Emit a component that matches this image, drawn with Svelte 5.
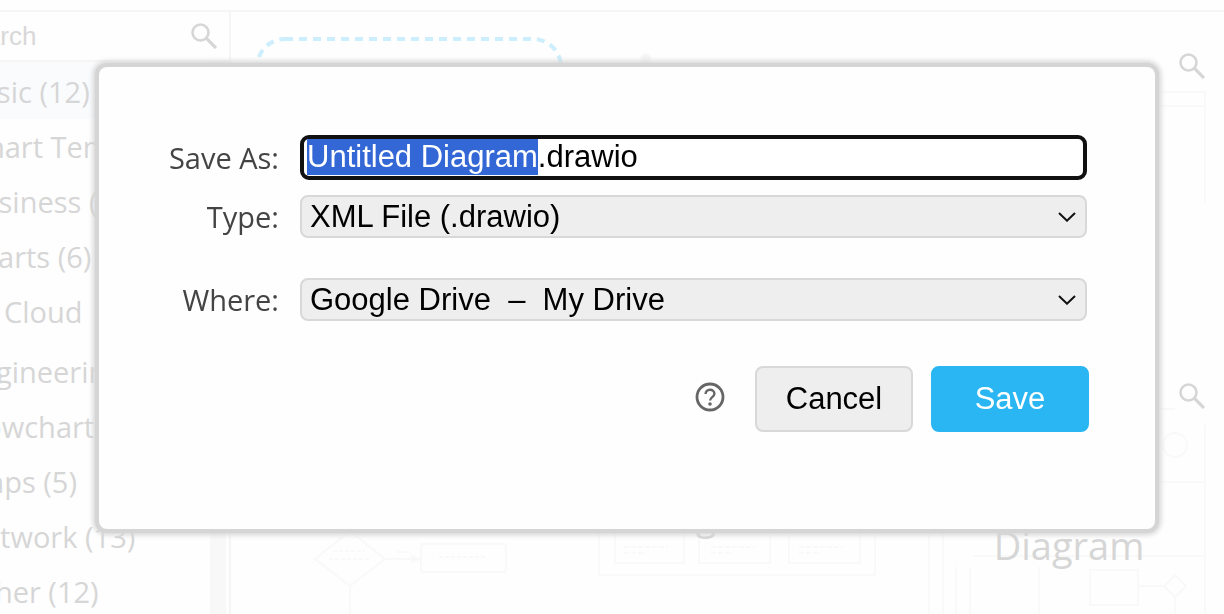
<script>
  import { onMount } from 'svelte';

  const categories = ['Basic (12)', 'Smart Tem', 'Business (', 'Charts (6)', 'Cloud', 'Engineerin', 'Flowchart', 'Maps (5)', 'Network (13)', 'Other (12)'];

  let filename = $state('Untitled Diagram.drawio');
  let nameInput;

  onMount(() => {
    nameInput.focus();
    nameInput.setSelectionRange(0, filename.lastIndexOf('.'));
  });
</script>

{#snippet magnifier()}
  <svg class="magnifier" viewBox="0 0 26 26" aria-hidden="true">
    <circle cx="9.5" cy="9.5" r="8" fill="none" stroke="currentColor" stroke-width="2.6" />
    <path d="M15.2 15.2 25 25" stroke="currentColor" stroke-width="3.2" />
  </svg>
{/snippet}

{#snippet chevron()}
  <svg class="chevron" viewBox="0 0 18 10" aria-hidden="true">
    <path d="M1 1 9 8.7 17 1" fill="none" stroke="#111" stroke-width="2" />
  </svg>
{/snippet}

<div class="page">
  <aside>
    <div class="search">
      <input type="text" placeholder="Search" aria-label="Search" />
      {@render magnifier()}
    </div>
    <div class="list">
      <ul>
        {#each categories as name, i}
          <li class:active={i === 0} class:provider={name === 'Cloud'}>{name}</li>
        {/each}
      </ul>
      <div class="track"></div>
    </div>
  </aside>

  <main>
    <div class="card">
      <svg class="sketch" viewBox="0 0 308 308" aria-hidden="true">
        <rect x="2" y="2" width="304" height="304" rx="28" fill="none" stroke="#cdeefc" stroke-width="4" stroke-dasharray="8 6" />
      </svg>
    </div>
    <div class="card">
      <svg class="sketch" viewBox="0 0 308 308" aria-hidden="true">
        <circle cx="61" cy="22" r="5" fill="#f5f5f5" />
      </svg>
    </div>
    <div class="card">
      <svg class="sketch" viewBox="0 0 308 308" aria-hidden="true">
        <path d="M20 55H290V165M20 69H290" />
      </svg>
      {@render magnifier()}
    </div>
    <div class="card">
      <svg class="sketch" viewBox="0 0 308 308" aria-hidden="true">
        <path d="M60 192 95 164 130 192 95 219ZM130 192H160M95 219V250" />
        <path d="m157 189 7 3-7 3Z" fill="#f6f6f6" />
        <path d="M78 184h32M74 192h42M142 185h14M184 190h48" stroke-dasharray="4 2" />
        <rect x="166" y="177" width="85" height="28" rx="3" />
      </svg>
    </div>
    <div class="card">
      <svg class="sketch" viewBox="0 0 308 308" aria-hidden="true">
        <path d="M14 90V208H290V90" />
        <path d="M30 150V196H99V150M114 150V196H185V150M204 150V196H275V150" />
        <path d="M39 180h44M39 186h22M126 180h44M126 186h22M214 180h44M214 186h22" stroke-dasharray="5 2" />
      </svg>
      <span class="caption upper">g</span>
    </div>
    <div class="card">
      <svg class="sketch" viewBox="0 0 308 308" aria-hidden="true">
        <path d="M14 42H260M290 58V308M14 115H290M14 160V308M28 160V308M58 189H290M41 200V308M55 200V308M124 200V308" />
        <circle cx="260" cy="78" r="12" />
        <rect x="175" y="203" width="48" height="35" />
        <path d="M223 219H249M249 219 260 208 271 219 260 230ZM260 230V308" />
      </svg>
      <span class="caption lower">Diagram</span>
      {@render magnifier()}
    </div>
  </main>
</div>

<div class="overlay">
  <form class="dialog" role="dialog" aria-label="Save As" onsubmit={(e) => e.preventDefault()}>
    <div class="fields">
      <label for="name">Save As:</label>
      <input id="name" type="text" bind:value={filename} bind:this={nameInput} spellcheck="false" />

      <label for="type">Type:</label>
      <div class="select">
        <select id="type"><option>XML File (.drawio)</option></select>
        {@render chevron()}
      </div>

      <label class="where" for="where">Where:</label>
      <div class="select where">
        <select id="where"><option>Google Drive&nbsp; –&nbsp; My Drive</option></select>
        {@render chevron()}
      </div>
    </div>
    <div class="actions">
      <a href="#help" aria-label="Help">
        <svg viewBox="0 0 30 30" aria-hidden="true">
          <circle cx="15" cy="15" r="13" fill="none" stroke="#666" stroke-width="2.8" />
          <path d="M10.6 12c0-2.6 1.9-4.3 4.4-4.3s4.4 1.7 4.4 4c0 3.2-4.3 3.6-4.3 6.8" fill="none" stroke="#666" stroke-width="2.4" />
          <circle cx="15" cy="22" r="1.8" fill="#666" />
        </svg>
      </a>
      <button type="button">Cancel</button>
      <button type="submit" class="primary">Save</button>
    </div>
  </form>
</div>

<style>
  :global(body) {
    background: #fefefe;
  }
  .page {
    box-sizing: border-box;
    display: flex;
    height: 100vh;
    overflow: hidden;
    padding-top: 10px;
    font-family: 'Open Sans', 'Noto Sans', sans-serif;
    color: #d6d6d6;
  }
  aside {
    box-sizing: border-box;
    flex: none;
    display: flex;
    flex-direction: column;
    width: 277px;
    margin-left: -46px;
    border-top: 2px solid #f5f5f5;
    border-right: 2px solid #f5f5f5;
  }
  .search {
    box-sizing: border-box;
    flex: none;
    display: flex;
    align-items: center;
    justify-content: space-between;
    height: 50px;
    padding-right: 12px;
    border-bottom: 2px solid #f5f5f5;
  }
  .search input {
    width: 180px;
    padding: 0;
    border: 0;
    background: none;
    font: 26px 'Liberation Sans', Arial, sans-serif;
  }
  .search input::placeholder {
    color: #d8d8d8;
  }
  .magnifier {
    width: 26px;
    height: 26px;
    color: #d6d6d6;
  }
  .list {
    flex: 1;
    display: flex;
  }
  ul {
    flex: 1;
    margin: 0;
    padding: 0;
    list-style: none;
  }
  li {
    height: 55px;
    padding-left: 8px;
    font-size: 29px;
    line-height: 55px;
    white-space: nowrap;
  }
  li.active {
    padding-top: 2px;
    background: #fafbfd;
  }
  li.provider {
    padding: 0 0 5px 50px;
  }
  .track {
    width: 16px;
    margin-right: 3px;
    background: #f8f8f8;
  }
  main {
    flex: 1;
    display: grid;
    grid-template-columns: repeat(3, 308px);
    grid-auto-rows: 308px;
    gap: 22px;
    padding: 25px 0 0 24px;
    border-top: 2px solid #f5f5f5;
  }
  .card {
    position: relative;
    display: flex;
    align-items: center;
    justify-content: center;
  }
  .sketch {
    position: absolute;
    inset: 0;
    fill: none;
    stroke: #f9f9f9;
    stroke-width: 2;
  }
  .card .magnifier {
    position: absolute;
    top: 16px;
    right: 18px;
  }
  .caption {
    position: relative;
    font-size: 38px;
    line-height: 48px;
  }
  .upper {
    padding: 0 66px 12px 0;
  }
  .lower {
    padding-top: 48px;
  }
  .overlay {
    position: fixed;
    inset: 0;
    padding: 67px 69px 0 99px;
    font-family: 'Liberation Sans', Arial, sans-serif;
    font-size: 31px;
  }
  .dialog {
    padding: 68px 66px 97px 69px;
    border-radius: 8px;
    background: #fefefe;
    box-shadow: 0 0 0 4px #d5d5d5, 0 0 5px 6px #d5d5d5;
  }
  .fields {
    display: grid;
    grid-template-columns: 111px 1fr;
    align-items: center;
    gap: 15px 21px;
    padding-right: 2px;
  }
  label {
    justify-self: end;
    font-family: 'Open Sans', 'Noto Sans', sans-serif;
    font-size: 29px;
    line-height: 43px;
    color: #444;
    white-space: nowrap;
  }
  .where {
    margin-top: 25px;
  }
  #name {
    box-sizing: border-box;
    width: 100%;
    height: 45px;
    padding: 0 3px 1px;
    border: 4px solid #111;
    border-radius: 9px;
    outline: 0;
    background: #fff;
    color: #000;
    font: inherit;
  }
  #name::selection {
    background: #3367d6;
    color: #fff;
  }
  .select {
    display: grid;
    align-items: center;
  }
  select {
    grid-area: 1 / 1;
    box-sizing: border-box;
    width: 100%;
    height: 43px;
    padding: 0 40px 0 8px;
    appearance: none;
    border: 2px solid #d8d8d8;
    border-radius: 8px;
    background: #eee;
    color: #000;
    font: inherit;
  }
  .chevron {
    grid-area: 1 / 1;
    justify-self: end;
    width: 18px;
    height: 10px;
    margin-right: 11px;
    pointer-events: none;
  }
  .actions {
    display: flex;
    align-items: center;
    justify-content: flex-end;
    gap: 18px;
    margin-top: 45px;
  }
  .actions a {
    display: flex;
    width: 30px;
    height: 30px;
    margin: 0 12px 4px 0;
  }
  button {
    box-sizing: border-box;
    width: 158px;
    height: 66px;
    padding: 0;
    border: 2px solid #d8d8d8;
    border-radius: 8px;
    background: #eee;
    color: #000;
    font: inherit;
  }
  .primary {
    border-color: #29b6f2;
    background: #29b6f2;
    color: #fff;
  }
</style>
